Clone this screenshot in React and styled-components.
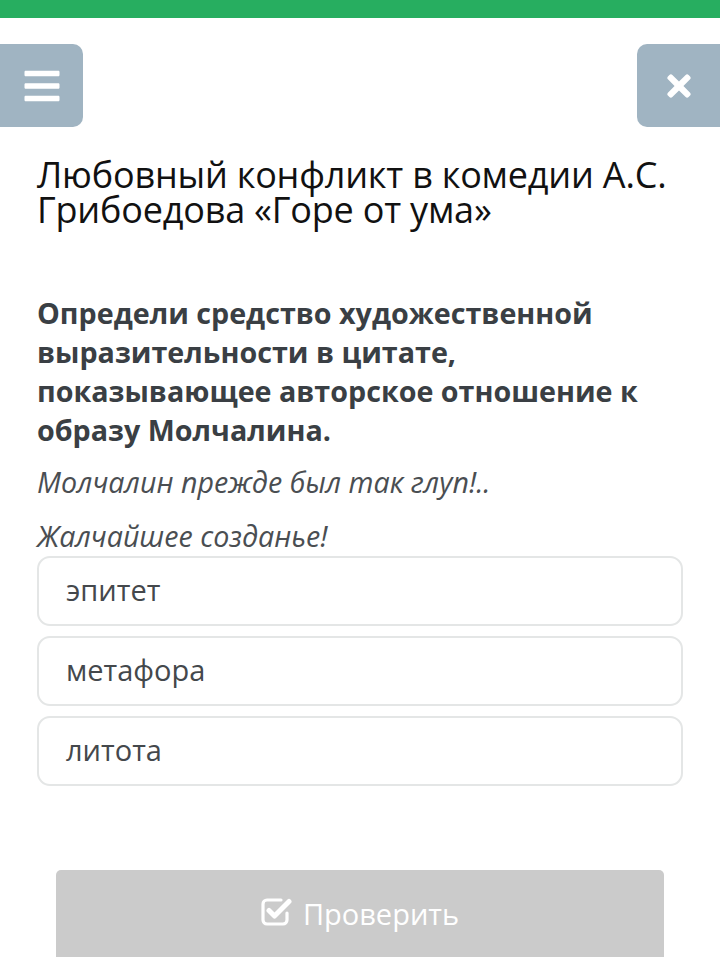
import React, { useState } from 'react'
import styled, { createGlobalStyle } from 'styled-components'
import { FaBars, FaTimes } from 'react-icons/fa'

const Global = createGlobalStyle`
  body{
    margin:0;
    background:#fff;
    font-family:"Open Sans", "Noto Sans", sans-serif;
  }
`;

const options = ["эпитет", "метафора", "литота"];

// old-style "check-square-o": open box with the tick going out of the corner
const CheckIcon = () => (
  <svg width="31" height="29" viewBox="0 0 31 29" fill="none">
    <path d="M20 3H6a4 4 0 0 0-4 4v16a4 4 0 0 0 4 4h16a4 4 0 0 0 4-4v-7" stroke="#fff" strokeWidth="3.2" strokeLinecap="round" />
    <path d="M8 13.5l5.5 5.5L28 4.5" stroke="#fff" strokeWidth="5" strokeLinecap="round" strokeLinejoin="round" />
  </svg>
);

function App() {
  const [picked, setPicked] = useState(null);

  return (
    <Page>
      <Global />
      <TopLine />
      <Header>
        <SideButton side="left"><FaBars /></SideButton>
        <SideButton side="right"><FaTimes /></SideButton>
      </Header>
      <Content>
        <Title>Любовный конфликт в комедии А.С. Грибоедова «Горе от ума»</Title>
        <Question>
          Определи средство художественной выразительности в цитате,
          показывающее авторское отношение к образу Молчалина.
        </Question>
        <Quote>Молчалин прежде был так глуп!..</Quote>
        <Quote>Жалчайшее созданье!</Quote>
        <Options>
          {options.map((x, key) => (
            <Option key={key} active={picked === key} onClick={() => setPicked(key)}>{x}</Option>
          ))}
        </Options>
      </Content>
      <Footer>
        <CheckButton disabled={picked === null}>
          <CheckIcon />
          <span>Проверить</span>
        </CheckButton>
      </Footer>
    </Page>
  )
}

const Page = styled.div`
  width:720px;
  height:957px;
  overflow:hidden;
  display:flex;
  flex-direction:column;
`;

const TopLine = styled.div`
  height:18px;
  background:#27ae60;
  flex-shrink:0;
`;

const Header = styled.div`
  display:flex;
  justify-content:space-between;
  margin-top:26px;
`;

const SideButton = styled.div`
  width:83px;
  height:83px;
  background:#a0b4c2;
  color:#fff;
  display:flex;
  align-items:center;
  justify-content:center;
  font-size:${p => p.side === 'left' ? '40px' : '34px'};
  border-radius:${p => p.side === 'left' ? '0 10px 10px 0' : '10px 0 0 10px'};
`;

const Content = styled.div`
  padding:0 37px;
`;

const Title = styled.h1`
  margin:30px 0 0;
  font-weight:400;
  font-size:36px;
  line-height:35px;
  color:#111;
  letter-spacing:-0.2px;
`;

const Question = styled.p`
  margin:66px 0 0;
  font-weight:700;
  font-size:28.7px;
  line-height:39px;
  color:#3a3f44;
`;

const Quote = styled.p`
  margin:11px 0 0;
  font-style:italic;
  font-size:28.6px;
  line-height:44px;
  color:#4a4e52;
  & + &{
    margin-top:10px;
  }
`;

const Options = styled.div`
  display:flex;
  flex-direction:column;
  gap:10px;
  margin-top:-2px;
`;

const Option = styled.div`
  height:70px;
  box-sizing:border-box;
  border:2px solid ${p => p.active ? '#9fb3c1' : '#e4e6e6'};
  border-radius:13px;
  display:flex;
  align-items:center;
  padding:0 27px 3px;
  font-size:29px;
  color:#44484c;
  cursor:pointer;
`;

const Footer = styled.div`
  margin-top:auto;
  padding:0 56px;
`;

const CheckButton = styled.button`
  width:100%;
  height:87px;
  border:none;
  border-radius:5px 5px 0 0;
  background:#cbcbcb;
  color:#fff;
  display:flex;
  align-items:center;
  justify-content:center;
  gap:11px;
  font-family:"Open Sans", sans-serif;
  font-size:29px;
  svg{
    margin-top:-4px;
  }
`;

export default App
